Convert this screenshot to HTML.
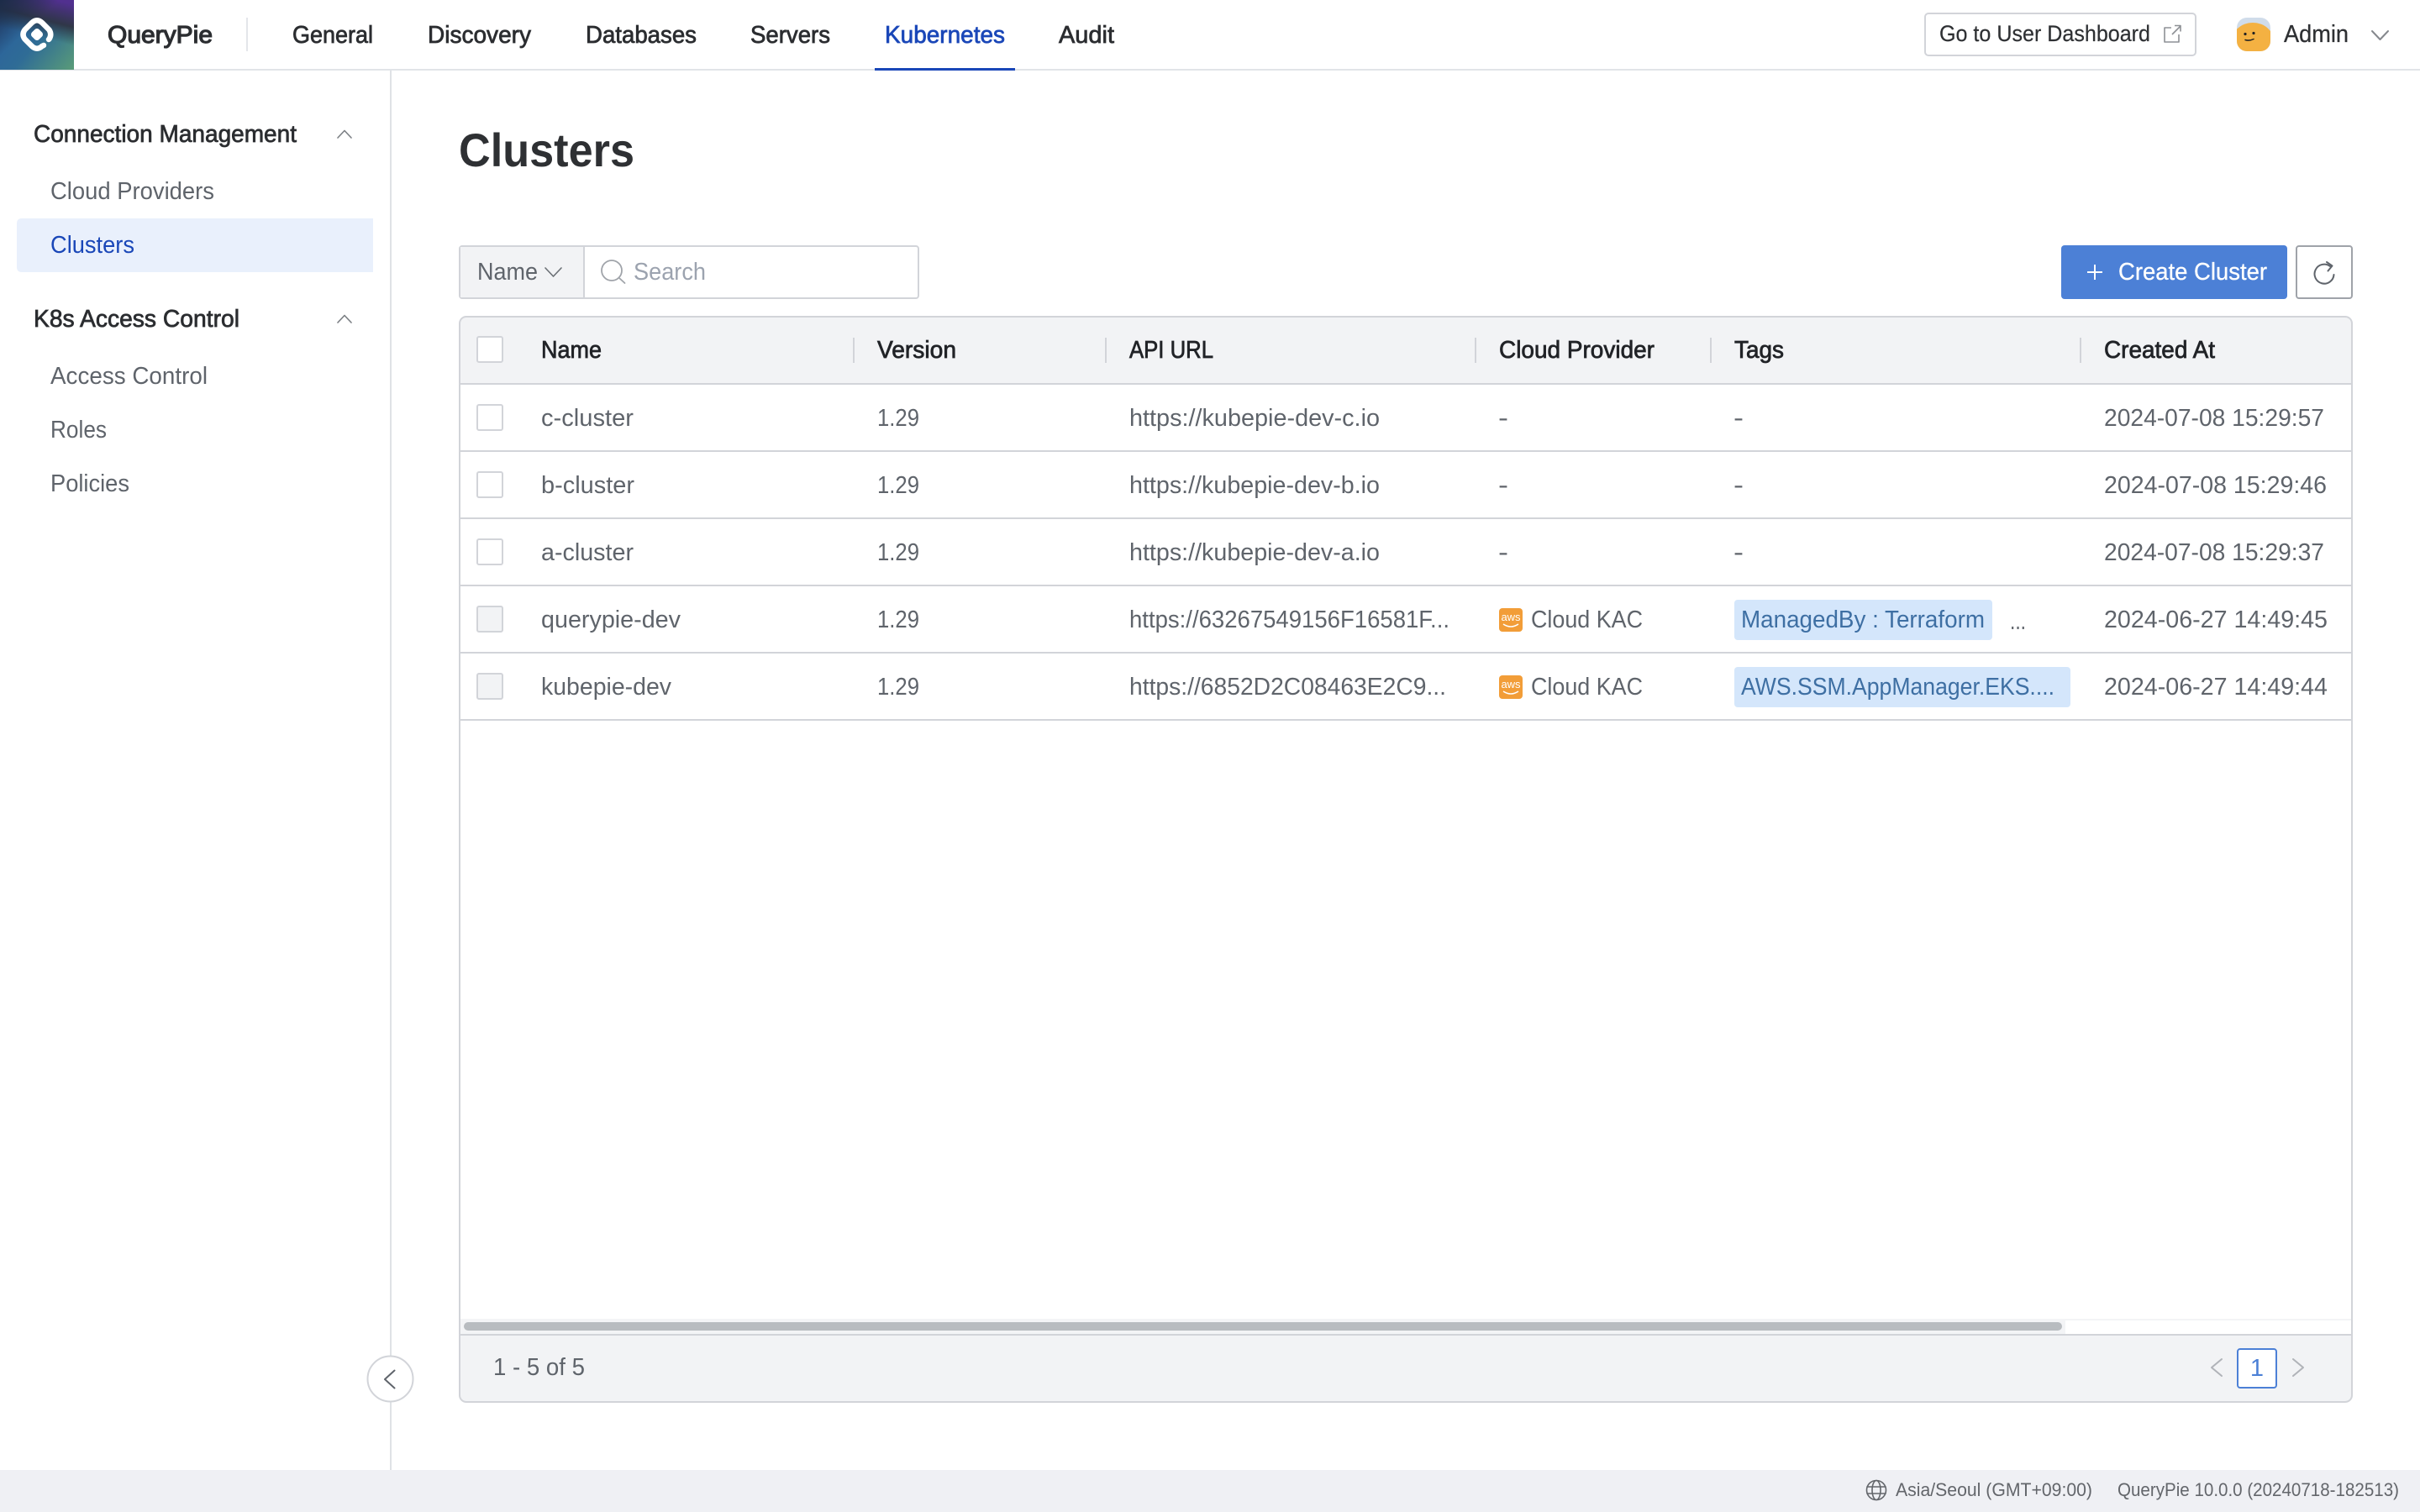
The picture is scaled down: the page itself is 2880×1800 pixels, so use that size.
<!DOCTYPE html>
<html><head><meta charset="utf-8"><title>Clusters</title>
<style>
html,body{margin:0;padding:0;background:#fff;width:2880px;height:1800px;overflow:hidden}
svg{display:block}
text{font-family:"Liberation Sans",sans-serif;font-size:29px;fill:#5f646b}
.m{stroke-width:.75px}
.nav{fill:#2b2d30;stroke:#2b2d30}
.sec{fill:#2b2d30;stroke:#2b2d30}
.th{fill:#212327;stroke:#212327}
.tag{fill:#3e6fa3}
.st{font-size:22.5px;fill:#63666b}
.ic{fill:none;stroke:#6b7075;stroke-width:2;stroke-linecap:round;stroke-linejoin:round}
</style></head><body>
<svg xmlns="http://www.w3.org/2000/svg" width="2880" height="1800" viewBox="0 0 2880 1800">
<defs>
<linearGradient id="g1" x1="0" y1="0.2" x2="1" y2="1"><stop offset="0" stop-color="#2a5f9f"/><stop offset=".5" stop-color="#2f6c96"/><stop offset="1" stop-color="#5a9c78"/></linearGradient>
<linearGradient id="g2" x1="0.75" y1="0" x2="0.6" y2="0.55"><stop offset="0" stop-color="#51308f"/><stop offset=".55" stop-color="#2f3040" stop-opacity=".9"/><stop offset="1" stop-color="#2a3a44" stop-opacity="0"/></linearGradient>
<linearGradient id="g3" x1="0" y1="0" x2="0.4" y2="0.4"><stop offset="0" stop-color="#1c2c48"/><stop offset="1" stop-color="#1c2c48" stop-opacity="0"/></linearGradient>
<clipPath id="tc"><rect x="547" y="377" width="2252" height="1292" rx="8"/></clipPath>
<clipPath id="av"><rect x="2662" y="21" width="40" height="40" rx="12"/></clipPath>
</defs>

<!-- status bar -->
<rect x="0" y="1750" width="2880" height="50" fill="#eff0f4"/>
<g class="ic" style="stroke:#63666b;stroke-width:1.6">
<circle cx="2233" cy="1774" r="11.5"/><ellipse cx="2233" cy="1774" rx="5" ry="11.5"/><path d="M2222 1770H2244M2222 1778H2244"/>
</g>
<text class="st" x="2256" y="1781" textLength="234" lengthAdjust="spacingAndGlyphs">Asia/Seoul (GMT+09:00)</text>
<text class="st" x="2520" y="1781" textLength="335" lengthAdjust="spacingAndGlyphs">QueryPie 10.0.0 (20240718-182513)</text>

<!-- top bar -->
<rect x="0" y="82" width="2880" height="2" fill="#e1e4e8"/>
<rect x="0" y="0" width="88" height="83" fill="url(#g1)"/>
<rect x="0" y="0" width="88" height="83" fill="url(#g2)"/>
<rect x="0" y="0" width="88" height="83" fill="url(#g3)"/>
<path d="M58 47L58.500 46.500Q62 41 58.500 35.500L50 27Q44 21.500 38 27L29.500 35.500Q25.500 41 29.500 46.500L38 55Q44 60.500 50 55L52 54" fill="none" stroke="#fff" stroke-width="6.500" stroke-linecap="round"/>
<rect x="38" y="35" width="12" height="12" rx="3.500" fill="#fff" transform="rotate(45 44 41)"/>
<text class="m nav" x="128" y="51" textLength="125" lengthAdjust="spacingAndGlyphs" style="stroke-width:1.2">QueryPie</text>
<rect x="293" y="21" width="2" height="40" fill="#e4e6ea"/>
<text class="m nav" x="348" y="51" textLength="96" lengthAdjust="spacingAndGlyphs">General</text>
<text class="m nav" x="509" y="51" textLength="123" lengthAdjust="spacingAndGlyphs">Discovery</text>
<text class="m nav" x="697" y="51" textLength="132" lengthAdjust="spacingAndGlyphs">Databases</text>
<text class="m nav" x="893" y="51" textLength="95" lengthAdjust="spacingAndGlyphs">Servers</text>
<text class="m" x="1053" y="51" textLength="143" lengthAdjust="spacingAndGlyphs" style="fill:#1a47b8;stroke:#1a47b8">Kubernetes</text>
<text class="m nav" x="1260" y="51" textLength="66" lengthAdjust="spacingAndGlyphs">Audit</text>
<rect x="1041" y="81" width="167" height="3" fill="#1a47b8"/>

<rect x="2291" y="16" width="322" height="50" rx="4" fill="#fff" stroke="#d2d4d9" stroke-width="2"/>
<text x="2308" y="49" textLength="251" lengthAdjust="spacingAndGlyphs" style="font-size:27px;fill:#2e3033;stroke:#2e3033;stroke-width:.2">Go to User Dashboard</text>
<g class="ic" style="stroke:#8d9095;stroke-width:1.6;stroke-linecap:butt">
<path d="M2584 33H2576V50H2593V41"/><path d="M2585 41L2595 31M2588 30.500H2595V37.500"/>
</g>
<g clip-path="url(#av)">
<rect x="2662" y="21" width="40" height="40" fill="#d0dcea"/>
<ellipse cx="2681" cy="49" rx="25" ry="22" fill="#f4b142"/>
</g>
<circle cx="2672" cy="40.500" r="1.600" fill="#222"/><circle cx="2682" cy="39.500" r="1.600" fill="#222"/>
<path d="M2672 47.500Q2677 49 2682 46.500" fill="none" stroke="#222" stroke-width="1.500" stroke-linecap="round"/>
<text x="2718" y="50" textLength="77" lengthAdjust="spacingAndGlyphs" style="fill:#2e3033;stroke:#2e3033;stroke-width:.3">Admin</text>
<path class="ic" d="M2823 37L2832.500 47L2842 37" style="stroke:#85888d"/>

<!-- sidebar -->
<rect x="464" y="84" width="2" height="1666" fill="#dfe2e6"/>
<text class="m sec" x="40" y="169" textLength="313" lengthAdjust="spacingAndGlyphs">Connection Management</text>
<path class="ic" d="M402 164L410 155.500L418 164" style="stroke:#7b7f84;stroke-width:1.600"/>
<text x="60" y="237" textLength="195" lengthAdjust="spacingAndGlyphs">Cloud Providers</text>
<path d="M26 260H444V324H26Q20 324 20 318V266Q20 260 26 260Z" fill="#e9f0fc"/>
<text x="60" y="301" textLength="100" lengthAdjust="spacingAndGlyphs" style="fill:#1a47b8">Clusters</text>
<text class="m sec" x="40" y="389" textLength="245" lengthAdjust="spacingAndGlyphs">K8s Access Control</text>
<path class="ic" d="M402 384L410 375.500L418 384" style="stroke:#7b7f84;stroke-width:1.600"/>
<text x="60" y="457" textLength="187" lengthAdjust="spacingAndGlyphs">Access Control</text>
<text x="60" y="521" textLength="67" lengthAdjust="spacingAndGlyphs">Roles</text>
<text x="60" y="585" textLength="94" lengthAdjust="spacingAndGlyphs">Policies</text>
<circle cx="464.500" cy="1641.500" r="27" fill="#fff" stroke="#d2d4d9" stroke-width="2"/>
<path class="ic" d="M469.500 1631.500L458 1642L469.500 1652.500" style="stroke:#5f646b"/>

<!-- title -->
<text x="546" y="198" textLength="209" lengthAdjust="spacingAndGlyphs" style="font-size:56px;font-weight:700;fill:#2e3033">Clusters</text>

<!-- search -->
<rect x="547" y="293" width="546" height="62" rx="3" fill="#fff" stroke="#d2d4d9" stroke-width="2"/>
<path d="M548 294H694V354H548Z" fill="#f2f3f5"/>
<rect x="694" y="293" width="2" height="62" fill="#d2d4d9"/>
<text x="568" y="333" textLength="72" lengthAdjust="spacingAndGlyphs">Name</text>
<path class="ic" d="M649 319L658.500 329L668 319" style="stroke-width:1.600"/>
<g class="ic" style="stroke:#a0a4aa;stroke-width:1.800"><circle cx="728" cy="322" r="12"/><path d="M737 331L743.500 337"/></g>
<text x="754" y="333" textLength="86" lengthAdjust="spacingAndGlyphs" style="fill:#9ca3af">Search</text>

<!-- buttons -->
<rect x="2453" y="292" width="269" height="64" rx="4" fill="#4c80d6"/>
<path d="M2484 324H2502M2493 315V333" stroke="#fff" stroke-width="2" fill="none"/>
<text x="2521" y="333" textLength="177" lengthAdjust="spacingAndGlyphs" style="fill:#fff;stroke:#fff;stroke-width:.3">Create Cluster</text>
<rect x="2733" y="293" width="66" height="62" rx="3" fill="#fff" stroke="#9fa3a9" stroke-width="2"/>
<path class="ic" d="M2773 317A11.500 11.500 0 1 0 2777.500 327" style="stroke:#5f646b"/>
<path class="ic" d="M2769 312L2775.500 316.500L2770.500 322.500" style="stroke:#5f646b"/>

<!-- table -->
<g clip-path="url(#tc)">
<rect x="547" y="377" width="2252" height="80" fill="#f2f3f5"/>
<rect x="547" y="1589" width="2252" height="80" fill="#f2f3f5"/>
<rect x="547" y="1570" width="2252" height="2" fill="#f3f4f6"/>
<rect x="547" y="1570" width="1911" height="19" fill="#f3f4f6"/>
<rect x="552" y="1574" width="1902" height="10" rx="5" fill="#b8bcc0"/>
</g>
<g fill="#d2d4d9">
<rect x="547" y="456" width="2252" height="2"/>
<rect x="547" y="536" width="2252" height="2"/>
<rect x="547" y="616" width="2252" height="2"/>
<rect x="547" y="696" width="2252" height="2"/>
<rect x="547" y="776" width="2252" height="2"/>
<rect x="547" y="856" width="2252" height="2"/>
<rect x="547" y="1588" width="2252" height="2"/>
<rect x="1015" y="402" width="2" height="30"/>
<rect x="1315" y="402" width="2" height="30"/>
<rect x="1755" y="402" width="2" height="30"/>
<rect x="2035" y="402" width="2" height="30"/>
<rect x="2475" y="402" width="2" height="30"/>
</g>
<rect x="547" y="377" width="2252" height="1292" rx="8" fill="none" stroke="#d2d4d9" stroke-width="2"/>

<!-- checkboxes -->
<g fill="#fff" stroke="#d2d4d9" stroke-width="2">
<rect x="568" y="401" width="30" height="30" rx="2"/>
<rect x="568" y="482" width="30" height="30" rx="2"/>
<rect x="568" y="562" width="30" height="30" rx="2"/>
<rect x="568" y="642" width="30" height="30" rx="2"/>
<rect x="568" y="722" width="30" height="30" rx="2" fill="#f2f3f5"/>
<rect x="568" y="802" width="30" height="30" rx="2" fill="#f2f3f5"/>
</g>

<!-- header -->
<text class="m th" x="644" y="426" textLength="72" lengthAdjust="spacingAndGlyphs">Name</text>
<text class="m th" x="1044" y="426" textLength="94" lengthAdjust="spacingAndGlyphs">Version</text>
<text class="m th" x="1344" y="426" textLength="100" lengthAdjust="spacingAndGlyphs">API URL</text>
<text class="m th" x="1784" y="426" textLength="185" lengthAdjust="spacingAndGlyphs">Cloud Provider</text>
<text class="m th" x="2064" y="426" textLength="59" lengthAdjust="spacingAndGlyphs">Tags</text>
<text class="m th" x="2504" y="426" textLength="132" lengthAdjust="spacingAndGlyphs">Created At</text>

<!-- rows -->
<text x="644" y="507" textLength="110" lengthAdjust="spacingAndGlyphs">c-cluster</text>
<text x="1044" y="507" textLength="50" lengthAdjust="spacingAndGlyphs">1.29</text>
<text x="1344" y="507" textLength="298" lengthAdjust="spacingAndGlyphs">https://kubepie-dev-c.io</text>
<text x="1783" y="507" textLength="12" lengthAdjust="spacingAndGlyphs">-</text>
<text x="2063" y="507" textLength="12" lengthAdjust="spacingAndGlyphs">-</text>
<text x="2504" y="507" textLength="262" lengthAdjust="spacingAndGlyphs">2024-07-08 15:29:57</text>

<text x="644" y="587" textLength="111" lengthAdjust="spacingAndGlyphs">b-cluster</text>
<text x="1044" y="587" textLength="50" lengthAdjust="spacingAndGlyphs">1.29</text>
<text x="1344" y="587" textLength="298" lengthAdjust="spacingAndGlyphs">https://kubepie-dev-b.io</text>
<text x="1783" y="587" textLength="12" lengthAdjust="spacingAndGlyphs">-</text>
<text x="2063" y="587" textLength="12" lengthAdjust="spacingAndGlyphs">-</text>
<text x="2504" y="587" textLength="265" lengthAdjust="spacingAndGlyphs">2024-07-08 15:29:46</text>

<text x="644" y="667" textLength="110" lengthAdjust="spacingAndGlyphs">a-cluster</text>
<text x="1044" y="667" textLength="50" lengthAdjust="spacingAndGlyphs">1.29</text>
<text x="1344" y="667" textLength="298" lengthAdjust="spacingAndGlyphs">https://kubepie-dev-a.io</text>
<text x="1783" y="667" textLength="12" lengthAdjust="spacingAndGlyphs">-</text>
<text x="2063" y="667" textLength="12" lengthAdjust="spacingAndGlyphs">-</text>
<text x="2504" y="667" textLength="262" lengthAdjust="spacingAndGlyphs">2024-07-08 15:29:37</text>

<text x="644" y="747" textLength="166" lengthAdjust="spacingAndGlyphs">querypie-dev</text>
<text x="1044" y="747" textLength="50" lengthAdjust="spacingAndGlyphs">1.29</text>
<text x="1344" y="747" textLength="381" lengthAdjust="spacingAndGlyphs">https://63267549156F16581F...</text>
<rect x="1784" y="724" width="28" height="28" rx="4" fill="#f29d38"/>
<text x="1798" y="739" text-anchor="middle" style="font-size:13px;fill:#fff">aws</text>
<path d="M1789 743Q1798 749 1807 743" fill="none" stroke="#fff" stroke-width="1.500"/>
<text x="1822" y="747" textLength="133" lengthAdjust="spacingAndGlyphs">Cloud KAC</text>
<rect x="2064" y="714" width="307" height="48" rx="4" fill="#d4e6fb"/>
<text class="tag" x="2072" y="747" textLength="290" lengthAdjust="spacingAndGlyphs">ManagedBy : Terraform</text>
<text x="2392" y="749" textLength="19" lengthAdjust="spacingAndGlyphs">...</text>
<text x="2504" y="747" textLength="266" lengthAdjust="spacingAndGlyphs">2024-06-27 14:49:45</text>

<text x="644" y="827" textLength="155" lengthAdjust="spacingAndGlyphs">kubepie-dev</text>
<text x="1044" y="827" textLength="50" lengthAdjust="spacingAndGlyphs">1.29</text>
<text x="1344" y="827" textLength="377" lengthAdjust="spacingAndGlyphs">https://6852D2C08463E2C9...</text>
<rect x="1784" y="804" width="28" height="28" rx="4" fill="#f29d38"/>
<text x="1798" y="819" text-anchor="middle" style="font-size:13px;fill:#fff">aws</text>
<path d="M1789 823Q1798 829 1807 823" fill="none" stroke="#fff" stroke-width="1.500"/>
<text x="1822" y="827" textLength="133" lengthAdjust="spacingAndGlyphs">Cloud KAC</text>
<rect x="2064" y="794" width="400" height="48" rx="4" fill="#d4e6fb"/>
<text class="tag" x="2072" y="827" textLength="373" lengthAdjust="spacingAndGlyphs">AWS.SSM.AppManager.EKS....</text>
<text x="2504" y="827" textLength="266" lengthAdjust="spacingAndGlyphs">2024-06-27 14:49:44</text>

<!-- footer -->
<text x="587" y="1637" textLength="109" lengthAdjust="spacingAndGlyphs">1 - 5 of 5</text>
<path class="ic" d="M2644 1618L2632 1628L2644 1638" style="stroke:#b0b3b8"/>
<rect x="2663" y="1606" width="46" height="46" rx="3" fill="#fff" stroke="#4c80d6" stroke-width="2"/>
<text x="2686" y="1638" text-anchor="middle" style="fill:#4c80d6">1</text>
<path class="ic" d="M2729 1618L2741 1628L2729 1638" style="stroke:#b0b3b8"/>
</svg>
</body></html>
